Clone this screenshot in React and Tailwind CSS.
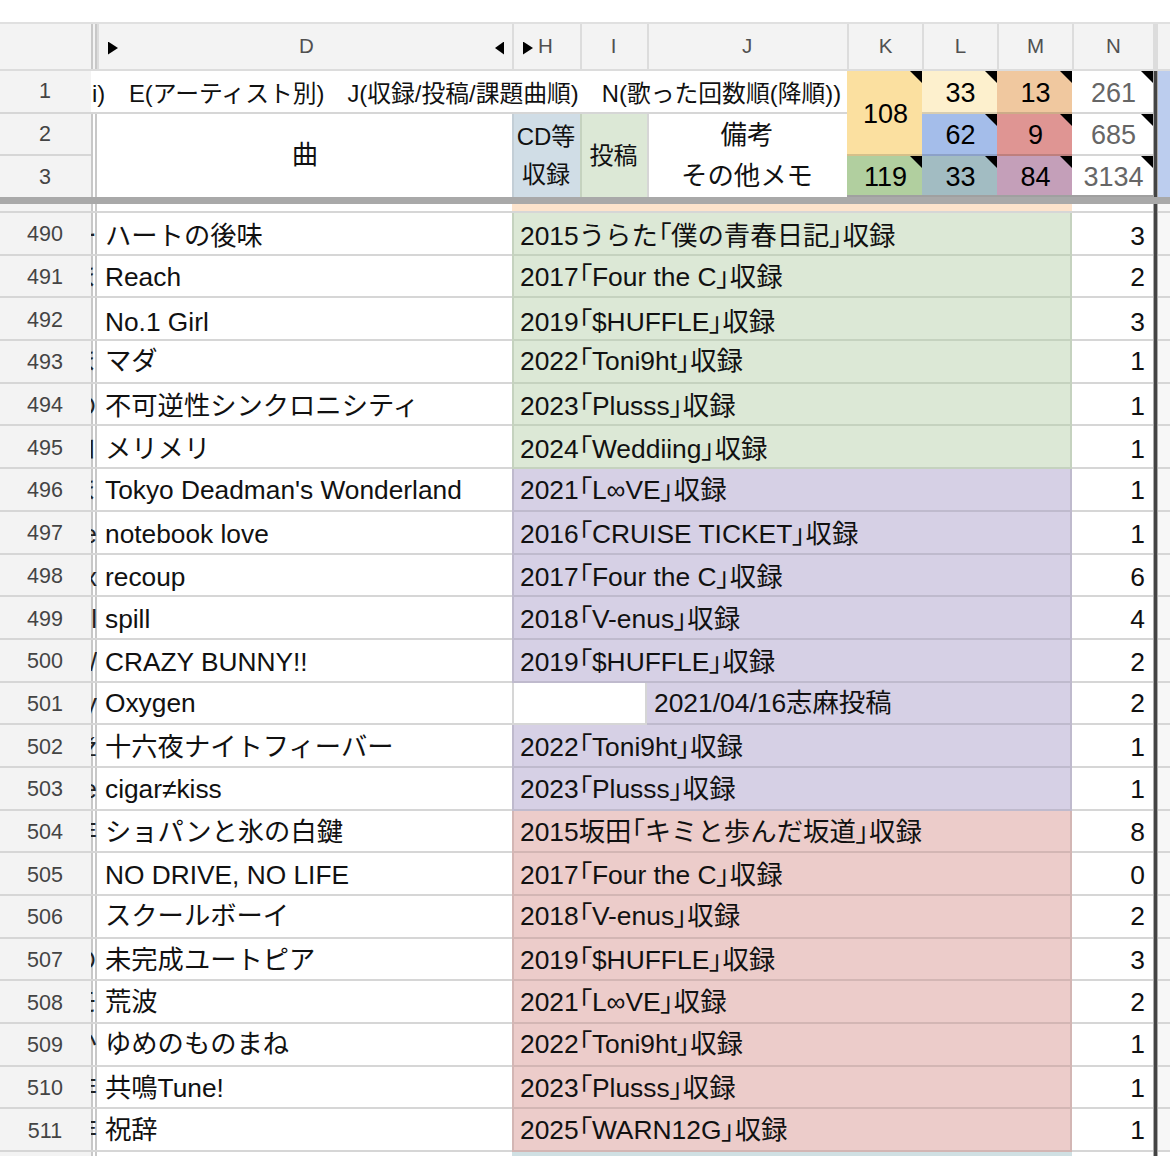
import React from "react";

const COLS = "grid grid-cols-[91px_6px_415px_68px_67px_200px_75px_75px_75px_81px_5px_12px]";
const LINES = "bg-[linear-gradient(to_right,#c8c8c8_2px,transparent_2px,transparent_4px,#c8c8c8_4px)]";
const green = "bg-[#dce8d6] border-[#c5d2bf]";
const purple = "bg-[#d6d0e5] border-[#bfbacd]";
const red = "bg-[#ecccca] border-[#d3b6b4]";

// last field nudges the text the way the original rows sit unevenly
const songs = [
  [490, "ー", "ハートの後味", "2015うらた「僕の青春日記」収録", 3, green, "pt-[6px]"],
  [491, "ま", "Reach", "2017「Four the C」収録", 2, green, "pt-[2px]"],
  [492, "", "No.1 Girl", "2019「$HUFFLE」収録", 3, green, "pt-[6px]"],
  [493, "ま", "マダ", "2022「Toni9ht」収録", 1, green, ""],
  [494, "の", "不可逆性シンクロニシティ", "2023「Plusss」収録", 1, green, "pt-[4px]"],
  [495, "コ", "メリメリ", "2024「Weddiing」収録", 1, green, "pt-[4px]"],
  [496, "ま", "Tokyo Deadman's Wonderland", "2021「L∞VE」収録", 1, purple, "pt-[2px]"],
  [497, "e", "notebook love", "2016「CRUISE TICKET」収録", 1, purple, "pt-[4px]"],
  [498, "x", "recoup", "2017「Four the C」収録", 6, purple, "pt-[4px]"],
  [499, "l", "spill", "2018「V-enus」収録", 4, purple, "pt-[2px]"],
  [500, "/", "CRAZY BUNNY!!", "2019「$HUFFLE」収録", 2, purple, "pt-[4px]"],
  [501, "y", "Oxygen", "2021/04/16志麻投稿", 2, purple, ""],
  [502, "ž", "十六夜ナイトフィーバー", "2022「Toni9ht」収録", 1, purple, "pt-[2px]"],
  [503, "e", "cigar≠kiss", "2023「Plusss」収録", 1, purple, "pt-[2px]"],
  [504, "非", "ショパンと氷の白鍵", "2015坂田「キミと歩んだ坂道」収録", 8, red, "pt-[2px]"],
  [505, "", "NO DRIVE, NO LIFE", "2017「Four the C」収録", 0, red, "pt-[2px]"],
  [506, "く", "スクールボーイ", "2018「V-enus」収録", 2, red, ""],
  [507, "の", "未完成ユートピア", "2019「$HUFFLE」収録", 3, red, "pt-[2px]"],
  [508, "モ", "荒波", "2021「L∞VE」収録", 2, red, ""],
  [509, "か", "ゆめのものまね", "2022「Toni9ht」収録", 1, red, ""],
  [510, "非", "共鳴Tune!", "2023「Plusss」収録", 1, red, "pt-[2px]"],
  [511, "非", "祝辞", "2025「WARN12G」収録", 1, red, ""],
];

// the corner brackets are set narrow in the original font
function Note({ text }) {
  const parts = text.split(/([「」])/);
  return (
    <span>
      {parts.map((p, i) =>
        p === "「" || p === "」" ? (
          <span key={i} className="[font-feature-settings:'palt']">{p}</span>
        ) : (
          <span key={i}>{p}</span>
        )
      )}
    </span>
  );
}

function Corner() {
  return <div className="absolute top-0 right-0 w-[12px] h-[12px] bg-black [clip-path:polygon(0_0,100%_0,100%_100%)]" />;
}

function HeadCell({ children, className = "justify-center" }) {
  return (
    <div className={"flex items-center pb-[1px] bg-[#f3f3f3] text-[#505050] text-[20.5px] border-l-2 border-[#dcdcdc] border-b-2 " + className}>
      {children}
    </div>
  );
}

function Divider() {
  return <div className="bg-[#444] border-x-[1.5px] border-[#aaa] -mb-[2px]" />;
}

function Stat({ value, bg, className = "", grey }) {
  return (
    <div className={"relative flex items-center justify-center pt-[3px] pl-[2px] text-[27px] border-b-2 " + bg + (grey ? " text-[#666]" : " text-black") + " " + className}>
      {value}
      <Corner />
    </div>
  );
}

function RowNum({ children, className = "" }) {
  return (
    <div className={"flex items-center justify-center bg-[#f3f3f3] text-[#444] text-[21.5px] pr-[1px] " + className}>{children}</div>
  );
}

function Row({ song }) {
  const [num, frag, title, note, count, tone, nudge] = song;
  const blank = num === 501;
  return (
    <div className={COLS + " grid-rows-[40.7px] h-[42.7px] border-b-2 border-[#d6d6d6] text-[26.4px] leading-[28px] text-[#111]"}>
      <RowNum className="pt-[2px]">{num}</RowNum>
      <div className={"flex justify-end items-center overflow-hidden whitespace-nowrap text-[#222] " + LINES + " " + nudge}>{frag}</div>
      <div className={"flex items-center pl-[8px] text-[26.3px] bg-white whitespace-nowrap overflow-hidden " + nudge}>{title}</div>
      {blank ? (
        <>
          <div className="col-span-2 bg-white border-l-2 border-r-2 border-[#d6d6d6]" />
          <div className={"col-span-4 flex items-center pl-[7px] whitespace-nowrap -mb-[2px] border-b-2 border-r-2 " + tone + " " + nudge}>
            <Note text={note} />
          </div>
        </>
      ) : (
        <div className={"col-span-6 flex items-center pl-[6px] whitespace-nowrap border-l-2 -mb-[2px] border-b-2 border-r-2 " + tone + " " + nudge}>
          <Note text={note} />
        </div>
      )}
      <div className={"flex items-center justify-end pr-[8px] bg-white " + nudge}>{count}</div>
      <Divider />
      <div className="bg-[#f7f7f7]" />
    </div>
  );
}

export default function App() {
  return (
    <div className="w-[1170px] h-[1156px] overflow-hidden bg-white pt-[22px] font-['Liberation_Sans','Noto_Sans_CJK_JP',sans-serif]">
      <div className="h-[2px] bg-[#e0e0e0]" />

      <div className={COLS + " grid-rows-[47px_43px_42px_41px]"}>
        <div className="bg-[#f3f3f3] border-b-2 border-[#dcdcdc]" />
        <div className={"bg-[#f3f3f3] border-b-2 border-[#dcdcdc] " + LINES} />
        <HeadCell className="justify-between pl-[9px] pr-[8px]">
          <div className="w-[10px] h-[13px] bg-black [clip-path:polygon(0_0,100%_50%,0_100%)] mt-[4px]" />
          <span>D</span>
          <div className="w-[9px] h-[13px] bg-black [clip-path:polygon(100%_0,0_50%,100%_100%)] mt-[4px]" />
        </HeadCell>
        <HeadCell className="justify-start pl-[9px] gap-[5px]">
          <div className="w-[10px] h-[13px] bg-black [clip-path:polygon(0_0,100%_50%,0_100%)] mt-[4px]" />
          <span>H</span>
        </HeadCell>
        <HeadCell className="justify-center pr-[2px]">I</HeadCell>
        <HeadCell className="justify-center pr-[2px]">J</HeadCell>
        <HeadCell>K</HeadCell>
        <HeadCell>L</HeadCell>
        <HeadCell>M</HeadCell>
        <HeadCell>N</HeadCell>
        <div className="bg-[#dcdcdc]" />
        <div className="bg-[#f3f3f3] border-b-2 border-[#dcdcdc]" />

        {/* row 1 */}
        <RowNum className="border-b-2 border-[#d6d6d6]">1</RowNum>
        <div className="col-span-5 row-start-2 col-start-2 flex items-center pt-[5px] gap-[23px] overflow-hidden whitespace-nowrap text-[23.8px] text-[#111] border-b-2 border-[#d6d6d6] bg-white">
          <span className="ml-[1px] w-[13px]">i)</span>
          <span className="ml-[1px]">E(アーティスト別)</span>
          <span>J(収録/投稿/課題曲順)</span>
          <span>N(歌った回数順(降順))</span>
        </div>
        <Stat value="108" bg="bg-[#fbe0a0] border-[#d6c08a]" className="row-span-2 col-start-7" />
        <Stat value="33" bg="bg-[#fdf0cd] border-[#d8cdb0]" />
        <Stat value="13" bg="bg-[#f0c89f] border-[#cdab88]" />
        <Stat value="261" bg="bg-white border-[#d6d6d6]" grey />
        <Divider />
        <div className="bg-[#bccdee]" />

        {/* row 2 */}
        <RowNum className="border-b-2 border-[#d6d6d6] row-start-3">2</RowNum>
        <div className={"row-span-2 " + LINES} />
        <div className="row-span-2 flex items-center justify-center pl-[1px] text-[26.4px] text-[#111] bg-white">曲</div>
        <div className="row-span-2 flex flex-col items-center justify-center pr-[2px] gap-[6px] text-[24px] leading-[32px] bg-[#d0dde6] border-l-2 border-[#c3ced6] text-[#111]">
          <span>CD等</span>
          <span>収録</span>
        </div>
        <div className="row-span-2 flex items-center justify-center pr-[2px] text-[24px] text-[#111] bg-[#dce8d6] border-l-2 border-[#c5d2bf]">投稿</div>
        <div className="row-span-2 flex flex-col items-center justify-center pr-[2px] pt-[1px] gap-[8px] text-[26.4px] leading-[33px] text-[#111] bg-white border-l-2 border-[#d6d6d6]">
          <span>備考</span>
          <span>その他メモ</span>
        </div>
        <Stat value="62" bg="bg-[#a4bdea] border-[#8ca1c8]" className="col-start-8" />
        <Stat value="9" bg="bg-[#df9593] border-[#be7f7d]" />
        <Stat value="685" bg="bg-white border-[#d6d6d6]" grey />
        <Divider />
        <div className="bg-[#bccdee]" />

        {/* row 3 */}
        <RowNum className="row-start-4 col-start-1 pt-[2px]">3</RowNum>
        <Stat value="119" bg="bg-[#b1cf9f] border-[#a0a0a0]" className="col-start-7" />
        <Stat value="33" bg="bg-[#a2bcc2] border-[#a0a0a0]" />
        <Stat value="84" bg="bg-[#c49fb9] border-[#a0a0a0]" />
        <Stat value="3134" bg="bg-white border-[#a0a0a0]" grey />
        <Divider />
        <div className="bg-[#bccdee]" />
      </div>

      {/* frozen pane divider */}
      <div className="h-[7px] bg-[#a9a9a9] relative" />

      <div className={COLS + " h-[9px] border-b-2 border-[#d6d6d6]"}>
        <div className="bg-[#f3f3f3]" />
        <div className={LINES} />
        <div />
        <div className="col-span-6 bg-[#fce3cc]" />
        <div />
        <Divider />
        <div className="bg-[#f7f7f7]" />
      </div>

      {songs.map((s) => (
        <Row key={s[0]} song={s} />
      ))}

      <div className={COLS + " h-[10px]"}>
        <div className="bg-[#f3f3f3]" />
        <div className={LINES} />
        <div />
        <div className="col-span-6 bg-[#d0e0e3]" />
        <div />
        <Divider />
        <div className="bg-white" />
      </div>
    </div>
  );
}
